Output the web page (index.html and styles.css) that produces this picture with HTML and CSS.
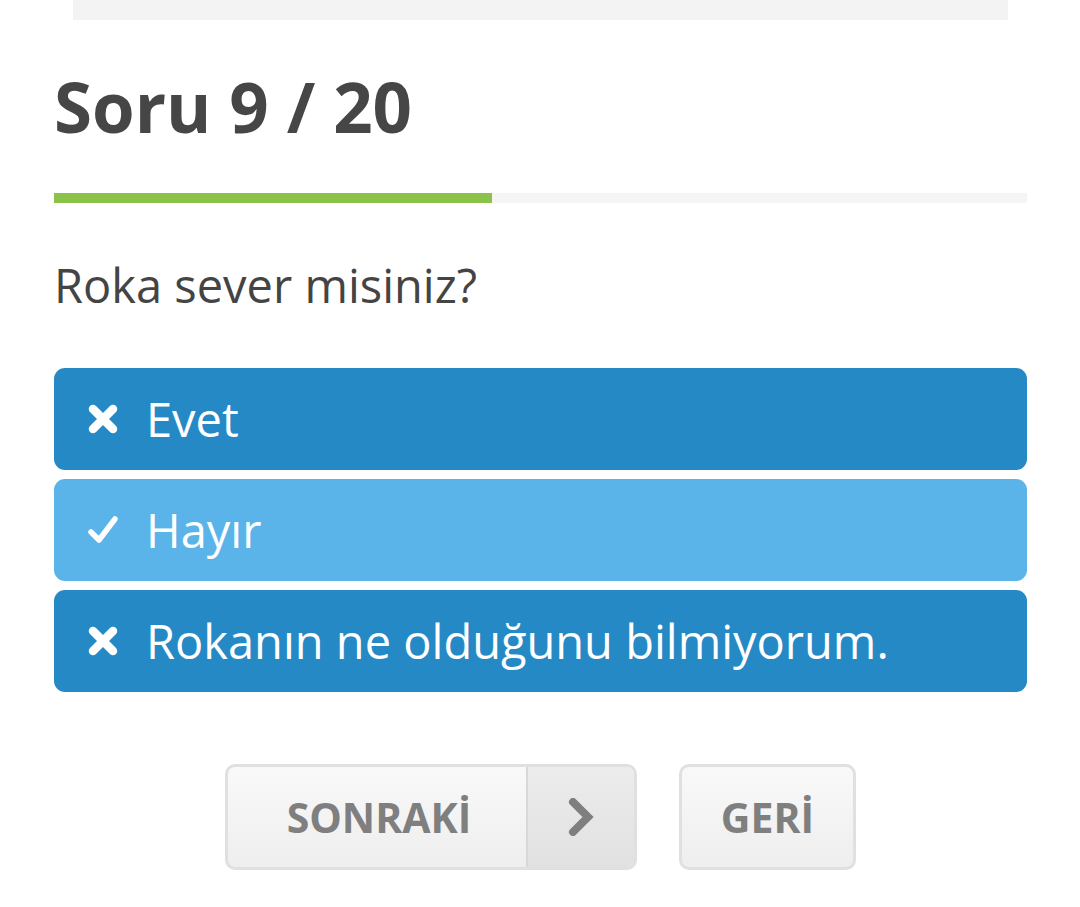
FILE: index.html
```html
<!DOCTYPE html>
<html lang="tr">
<head>
<meta charset="utf-8">
<link rel="stylesheet" href="styles.css">
</head>
<body>
<div class="topbar"></div>
<main class="quiz">
  <h1 class="title">Soru 9 / 20</h1>
  <div class="progress"><div class="progress-fill" style="width:45%"></div></div>
  <p class="question">Roka sever misiniz?</p>
  <div class="options">
    <div class="option">
      <svg class="icon" viewBox="0 0 30 30"><path d="M5 5 L25 25 M25 5 L5 25" stroke="#fff" stroke-width="8.5" stroke-linecap="round"/></svg>
      <span>Evet</span>
    </div>
    <div class="option selected">
      <svg class="icon" viewBox="0 0 30 30"><path d="M3 17 L11 25 L27 4" fill="none" stroke="#fff" stroke-width="5.5" stroke-linecap="round" stroke-linejoin="round"/></svg>
      <span>Hayır</span>
    </div>
    <div class="option">
      <svg class="icon" viewBox="0 0 30 30"><path d="M5 5 L25 25 M25 5 L5 25" stroke="#fff" stroke-width="8.5" stroke-linecap="round"/></svg>
      <span>Rokanın ne olduğunu bilmiyorum.</span>
    </div>
  </div>
  <div class="actions">
    <button class="btn btn-next"><span class="btn-label">SONRAKİ</span><span class="btn-arrow"><svg viewBox="0 0 26 38" width="26" height="38"><path d="M5 4 L20 19 L5 34" fill="none" stroke="#7f7f7f" stroke-width="8" stroke-linecap="round" stroke-linejoin="miter"/></svg></span></button>
    <button class="btn btn-back"><span class="btn-label">GERİ</span></button>
  </div>
</main>
</body>
</html>
```
FILE: styles.css
```css
* { box-sizing: border-box; }
html, body { margin: 0; padding: 0; background: #fff; }
body { font-family: "Open Sans", "Noto Sans", sans-serif; color: #444; }
.topbar { margin: 0 72px 0 73px; height: 20px; background: #f3f3f3; }
.quiz { padding: 0 53px 0 54px; }
.title { margin: 0; padding-top: 37px; font-size: 69px; line-height: 98px; font-weight: 700; color: #464646; letter-spacing: 0; }
.progress { margin-top: 38px; height: 10px; background: #f5f5f5; }
.progress-fill { height: 100%; background: #8bc34a; }
.question { margin: 52px 0 0; font-size: 47px; line-height: 60px; font-weight: 400; color: #444; }
.options { margin-top: 53px; display: flex; flex-direction: column; gap: 9px; }
.option { height: 102px; border-radius: 11px; background: #2589c6; color: #fff; display: flex; align-items: center; padding-left: 34px; font-size: 47px; }
.option.selected { background: #5ab4ea; }
.option .icon { width: 30px; height: 30px; margin-right: 28px; flex: none; }
.actions { margin-top: 72px; display: flex; justify-content: center; gap: 42px; }
.btn { font-family: inherit; display: flex; align-items: stretch; padding: 0; height: 106px; border: 3px solid #e0e0e0; border-radius: 10px; background: linear-gradient(#f9f9f9, #eeeeee); color: #7f7f7f; font-weight: 700; font-size: 41px; cursor: pointer; }
.btn-label { display: flex; align-items: center; justify-content: center; }
.btn-next .btn-label { width: 298px; padding-left: 4px; }
.btn-arrow { width: 108px; display: flex; align-items: center; justify-content: center; border-left: 2px solid #d8d8d8; background: linear-gradient(#ececec, #e1e1e1); border-radius: 0 7px 7px 0; }
.btn-back { width: 177px; }
.btn-back .btn-label { width: 100%; }
```
